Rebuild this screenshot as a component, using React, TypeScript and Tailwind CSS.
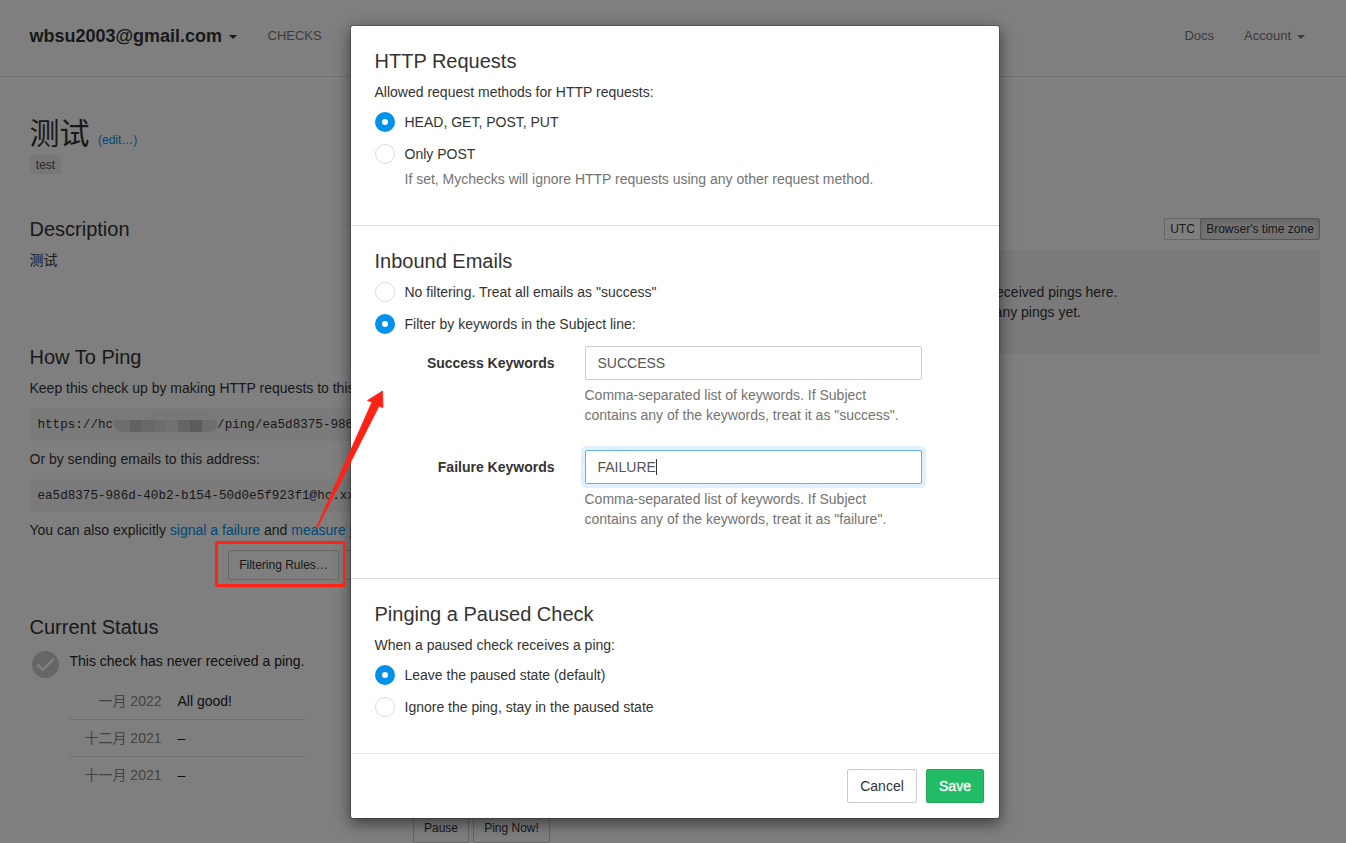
import React from 'react';

const ARROW_RED = '#ff2215';

function Caret() {
  return <span className="inline-block h-0 w-0 border-x-4 border-t-4 border-x-transparent border-t-current" />;
}

function Radio({ checked = false, children }: { checked?: boolean; children: React.ReactNode }) {
  return (
    <label className="mb-3 flex h-5 items-center gap-[9.5px]">
      <span
        className={
          checked
            ? 'flex size-5 shrink-0 items-center justify-center rounded-full bg-[#0091ea]'
            : 'size-5 shrink-0 rounded-full border border-[#dddddd] bg-white'
        }
      >
        {checked && <span className="size-[6px] rounded-full bg-white" />}
      </span>
      <span className="whitespace-nowrap">{children}</span>
    </label>
  );
}

function Header() {
  return (
    <header className="flex h-[77px] shrink-0 items-start border-b border-[#e7e7e7] pt-[26px] text-[13px] leading-5 text-[#777777]">
      <div className="ml-[29.5px] flex w-[238px] items-center gap-[7px] text-[18px] font-bold text-[#333333]">
        <span>wbsu2003@gmail.com</span>
        <span className="flex pt-[2px]"><Caret /></span>
      </div>
      <span>CHECKS</span>
      <div className="mr-[41px] ml-auto flex gap-[30px]">
        <span>Docs</span>
        <span className="flex items-center gap-[6px]">
          Account
          <span className="flex pt-px"><Caret /></span>
        </span>
      </div>
    </header>
  );
}

function StatusRow({ month, value, last = false }: { month: string; value: string; last?: boolean }) {
  return (
    <div className={last ? 'flex h-[37px] items-center pb-px' : 'flex h-[37px] items-center border-b border-[#dddddd]'}>
      <span className="w-[91.5px] text-right text-[#888888]">{month}</span>
      <span className="pl-4">{value}</span>
    </div>
  );
}

function Redaction() {
  return (
    <svg className="h-[27px] w-[104px] shrink-0" viewBox="0 0 104 27">
      <rect x="30" y="0" width="74" height="18" rx="9" fill="#f1f1f1" />
      <path d="M0 9H104V13Q103 21 96 21H8Q1 20 0 11Z" fill="#dadada" />
      <rect x="17" y="9" width="12" height="12" fill="#c4c5c8" />
      <rect x="29" y="9" width="12" height="12" fill="#d0d0d3" />
      <rect x="53" y="9" width="12" height="12" fill="#e2e2e2" />
      <rect x="65" y="9" width="12" height="12" fill="#cccbc7" />
      <rect x="77" y="9" width="12" height="12" fill="#b8b8b8" />
    </svg>
  );
}

function LeftColumn() {
  return (
    <main className="w-[635px] shrink-0 pl-[30px] text-[14px] leading-5 text-[#333333]">
      <div className="-ml-[0.5px] flex h-[78px] items-end">
        <h1 className="text-[30px] leading-[42px]">测试</h1>
        <span className="mb-[5px] ml-[8.5px] text-[12px] text-[#0091ea]">(edit…)</span>
      </div>
      <span className="flex h-[19px] w-[31px] items-center justify-center rounded-[3px] bg-[#eeeeee] text-[12px] text-[#555555]">
        test
      </span>

      <h2 className="mt-[43px] -ml-[0.5px] text-[20px] leading-6">Description</h2>
      <p className="mt-[9px] -ml-[0.5px]">测试</p>

      <h2 className="mt-[75px] -ml-[0.5px] text-[20px] leading-6">How To Ping</h2>
      <p className="mt-[9px] -ml-[0.5px] whitespace-nowrap">Keep this check up by making HTTP requests to this</p>
      <div className="mt-[10px] flex h-[33px] items-center overflow-hidden rounded-[3px] bg-[#f5f5f5] pl-[7.5px] font-['Liberation_Mono',monospace] text-[12.6px]">
        <span>https://hc</span>
        <Redaction />
        <span>/ping/ea5d8375-986d</span>
      </div>
      <p className="mt-2 -ml-[0.5px]">Or by sending emails to this address:</p>
      <div className="mt-[10px] flex h-[33px] items-center rounded-[3px] bg-[#f5f5f5] pl-[7.5px] font-['Liberation_Mono',monospace] text-[12.6px]">
        ea5d8375-986d-40b2-b154-50d0e5f923f1@hc.xx
      </div>
      <p className="mt-2 -ml-[0.5px] whitespace-nowrap">
        You can also explicitly <span className="text-[#0091ea]">signal a failure</span> and{' '}
        <span className="text-[#0091ea]">measure j</span>
      </p>
      <div className="mt-[10px] ml-[198px] flex gap-1 text-[12px]">
        <button className="h-[30px] w-[111px] rounded-[2px] border border-[#cccccc] bg-white">Filtering Rules…</button>
        <span className="h-[30px] w-20 rounded-[2px] border border-[#cccccc]" />
      </div>

      <h2 className="mt-[35px] -ml-[0.5px] text-[20px] leading-6">Current Status</h2>
      <div className="mt-3 flex">
        <svg className="ml-[2px] size-[27px] shrink-0" viewBox="0 0 27 27">
          <circle cx="13.5" cy="13.5" r="13.5" fill="#cccccc" />
          <path d="M5.3 13.5 L10.8 18.7 L21.7 7.8" fill="none" stroke="white" strokeWidth="2.6" />
        </svg>
        <div className="ml-[11px] w-[235px] text-[#222222]">
          <p className="-ml-[0.5px] whitespace-nowrap">This check has never received a ping.</p>
          <div className="mt-[12px]">
            <StatusRow month="一月 2022" value="All good!" />
            <StatusRow month="十二月 2021" value="–" />
            <StatusRow month="十一月 2021" value="–" last />
          </div>
        </div>
      </div>
      <div className="mt-[19px] ml-[383px] flex gap-1 text-[12px]">
        <button className="h-[30px] w-[56px] rounded-[2px] border border-[#cccccc] bg-white">Pause</button>
        <button className="h-[30px] w-[77px] rounded-[2px] border border-[#cccccc] bg-white">Ping Now!</button>
      </div>
    </main>
  );
}

function RightColumn() {
  return (
    <aside className="ml-auto flex w-[655px] flex-col pt-[141px] pr-[26px] text-[14px] leading-5 text-[#333333]">
      <div className="flex self-end text-[12px]">
        <button className="h-[22px] w-[36px] rounded-l-[2px] border border-r-0 border-[#cccccc] bg-white">UTC</button>
        <button className="h-[22px] w-[120px] rounded-r-[2px] border border-[#adadad] bg-[#e6e6e6] whitespace-nowrap shadow-[inset_0_3px_5px_rgba(0,0,0,0.125)]">
          Browser's time zone
        </button>
      </div>
      <div className="mt-[10px] h-[104px] rounded-[3px] bg-[#f5f5f5] pt-8 text-right">
        <p className="pr-[202.5px]">received pings here.</p>
        <p className="pr-[239px]">any pings yet.</p>
      </div>
    </aside>
  );
}

function KeywordField({ label, value, word, focused = false }: { label: string; value: string; word: string; focused?: boolean }) {
  return (
    <div className="flex">
      <span className="w-[179.5px] pt-[7px] text-right font-bold">{label}</span>
      <div className="ml-[30.5px] w-[337px]">
        <div
          className={
            focused
              ? 'flex h-[34px] items-center rounded-[2px] border border-[#66afe9] px-[11.5px] text-[#555555] shadow-[0_0_0_4px_rgba(0,132,240,0.12)]'
              : 'flex h-[34px] items-center rounded-[2px] border border-[#cccccc] px-[11.5px] text-[#555555]'
          }
        >
          {value}
          {focused && <span className="h-4 w-px bg-[#333333]" />}
        </div>
        <p className="mt-[5px] -ml-[0.5px] whitespace-nowrap text-[#737373]">
          Comma-separated list of keywords. If Subject
          <br />
          contains any of the keywords, treat it as "{word}".
        </p>
      </div>
    </div>
  );
}

function FilteringDialog() {
  return (
    <div
      role="dialog"
      className="absolute top-[25px] left-[350px] flex h-[794px] w-[650px] flex-col rounded-[3px] border border-black/20 bg-white bg-clip-padding text-[14px] leading-5 text-[#333333] shadow-[0_5px_15px_rgba(0,0,0,0.5)]"
    >
      <section className="h-[200px] border-b border-[#dddddd] px-6 pt-[23px]">
        <h2 className="-ml-[0.5px] text-[20px] leading-6">HTTP Requests</h2>
        <p className="mt-[9px] mb-[10px] -ml-[0.5px]">Allowed request methods for HTTP requests:</p>
        <Radio checked>HEAD, GET, POST, PUT</Radio>
        <Radio>Only POST</Radio>
        <p className="-mt-[7px] ml-[29.5px] text-[#737373]">
          If set, Mychecks will ignore HTTP requests using any other request method.
        </p>
      </section>
      <section className="h-[353px] border-b border-[#dddddd] px-6 pt-[23px]">
        <h2 className="mb-[9px] -ml-[0.5px] text-[20px] leading-6">Inbound Emails</h2>
        <Radio>No filtering. Treat all emails as "success"</Radio>
        <Radio checked>Filter by keywords in the Subject line:</Radio>
        <div className="flex flex-col gap-[25px]">
          <KeywordField label="Success Keywords" value="SUCCESS" word="success" />
          <KeywordField label="Failure Keywords" value="FAILURE" word="failure" focused />
        </div>
      </section>
      <section className="h-[175px] border-b border-[#e5e5e5] px-6 pt-[23px]">
        <h2 className="-ml-[0.5px] text-[20px] leading-6">Pinging a Paused Check</h2>
        <p className="mt-[9px] mb-[10px] -ml-[0.5px]">When a paused check receives a ping:</p>
        <Radio checked>Leave the paused state (default)</Radio>
        <Radio>Ignore the ping, stay in the paused state</Radio>
      </section>
      <footer className="flex justify-end gap-[9px] px-[15px] pt-[15px]">
        <button className="h-[34px] w-[70px] rounded-[2px] border border-[#cccccc] bg-white">Cancel</button>
        <button className="h-[34px] w-[58px] rounded-[2px] border border-[#1fa855] bg-[#22bc66] text-white [-webkit-text-stroke:0.3px_white]">
          Save
        </button>
      </footer>
    </div>
  );
}

export default function App() {
  return (
    <div className="relative flex h-[843px] w-[1346px] flex-col overflow-hidden bg-white font-['Liberation_Sans','Noto_Sans_CJK_SC',sans-serif]">
      <Header />
      <div className="flex">
        <LeftColumn />
        <RightColumn />
      </div>
      <div className="absolute inset-0 bg-black/50" />
      <FilteringDialog />
      <div className="absolute top-[541px] left-[215px] h-[46px] w-[131px] rounded-[3px] border-[3px] border-[#ff2215]" />
      <svg className="absolute top-[388px] left-[314px] h-[142px] w-[72px]" viewBox="0 0 72 142">
        <path d="M68.5 3L53.5 12.5L58 14L2.5 139.5L3.5 139.5L65 18L69 19.5Z" fill={ARROW_RED} stroke={ARROW_RED} strokeWidth="0.8" />
      </svg>
    </div>
  );
}
